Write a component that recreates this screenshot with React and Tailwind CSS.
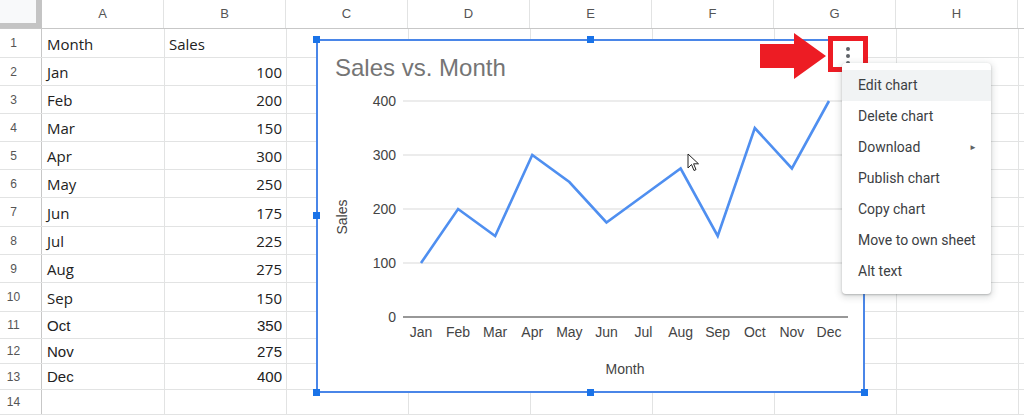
import React from "react";

const columns = ["A", "B", "C", "D", "E", "F", "G", "H"];

const rows = [
  ["Month", "Sales"],
  ["Jan", 100],
  ["Feb", 200],
  ["Mar", 150],
  ["Apr", 300],
  ["May", 250],
  ["Jun", 175],
  ["Jul", 225],
  ["Aug", 275],
  ["Sep", 150],
  ["Oct", 350],
  ["Nov", 275],
  ["Dec", 400],
  ["", ""],
];

const rowHeights = ["h-[29px]", "h-[28px]", "h-[28px]", "h-[28px]", "h-[28px]", "h-[28px]", "h-[29px]", "h-[28px]", "h-[28px]", "h-[29px]", "h-[27px]", "h-[25px]", "h-[26px]", "h-[25px]"];

const menuItems = ["Edit chart", "Delete chart", "Download", "Publish chart", "Copy chart", "Move to own sheet", "Alt text"];

const data = rows.slice(1, 13);
const px = (i) => 421 + i * 37.09;
const py = (v) => 317 - v * 0.54;

function Chart() {
  const points = data.map((d, i) => `${px(i)},${py(d[1])}`).join(" ");
  return (
    <div className="absolute left-[316px] top-[39px] w-[549px] h-[354px] bg-white">
      <svg className="absolute inset-0" width="549" height="354" viewBox="316 39 549 354">
        <text x="335" y="76" fontSize="24" fill="#757575" fontFamily="Liberation Sans, Arial, sans-serif">
          Sales vs. Month
        </text>
        {[400, 300, 200, 100].map((v) => (
          <g key={v}>
            <line x1="403" x2="848" y1={py(v)} y2={py(v)} stroke="#d9d9d9" strokeWidth="1.2" />
            <text x="396" y={py(v) + 5} fontSize="14" fill="#444" textAnchor="end" fontFamily="Liberation Sans, Arial, sans-serif">
              {v}
            </text>
          </g>
        ))}
        <line x1="403" x2="848" y1="317" y2="317" stroke="#333" strokeWidth="1.2" />
        <text x="396" y="322" fontSize="14" fill="#444" textAnchor="end" fontFamily="Liberation Sans, Arial, sans-serif">
          0
        </text>
        {data.map((d, i) => (
          <text key={d[0]} x={px(i)} y="337" fontSize="14" fill="#444" textAnchor="middle" fontFamily="Liberation Sans, Arial, sans-serif">
            {d[0]}
          </text>
        ))}
        <text x="625" y="374" fontSize="14" fill="#444" textAnchor="middle" fontFamily="Liberation Sans, Arial, sans-serif">
          Month
        </text>
        <text x="347" y="217" fontSize="14" fill="#444" textAnchor="middle" transform="rotate(-90 347 217)" fontFamily="Liberation Sans, Arial, sans-serif">
          Sales
        </text>
        <polyline points={points} fill="none" stroke="#4f8ff0" strokeWidth="2.6" strokeLinejoin="miter" />
      </svg>
      <div className="absolute inset-0 border-2 border-[#4a86e8]" />
    </div>
  );
}

function Handle({ className }) {
  return <div className={`absolute w-[7px] h-[7px] bg-[#1a73e8] ${className}`} />;
}

export default function App() {
  return (
    <div className="relative w-[1024px] h-[417px] overflow-hidden bg-white font-['Open_Sans',sans-serif] text-[#222]">
      {/* column headers */}
      <div className="flex h-[29px] border-b border-[#c7c7c7]">
        <div className="w-[42px] shrink-0 bg-[#f8f9fa] border-r-[6px] border-b-[5px] border-[#c4c4c4]" />
        {columns.map((c) => (
          <div key={c} className="w-[122px] shrink-0 border-r border-[#e2e3e3] text-center text-[13px] leading-[28px] text-[#555] font-['Liberation_Sans',sans-serif]">
            {c}
          </div>
        ))}
        <div className="flex-1" />
      </div>

      {rows.map((r, i) => (
        <div key={i} className={`flex ${rowHeights[i]} border-b border-[#e2e3e3]`}>
          <div className="w-[42px] shrink-0 border-r border-[#c7c7c7] flex items-center">
            <span className="w-[27px] text-center text-[12px] text-[#555] font-['Liberation_Sans',sans-serif]">{i + 1}</span>
          </div>
          <div className={`w-[123px] shrink-0 border-r border-[#e2e3e3] flex items-center pl-[5px] pt-[2px] text-[15px] ${i >= 10 ? "font-['Liberation_Sans',sans-serif]" : ""}`}>
            {r[0]}
          </div>
          <div className={`w-[122px] shrink-0 border-r border-[#e2e3e3] flex items-center pr-[4px] pt-[2px] text-[15px] ${i === 0 ? "justify-start pl-[4px]" : "justify-end"} ${i >= 10 ? "font-['Liberation_Sans',sans-serif]" : ""}`}>
            {r[1]}
          </div>
          {[0, 1, 2, 3, 4, 5].map((k) => (
            <div key={k} className="w-[122px] shrink-0 border-r border-[#e2e3e3]" />
          ))}
          <div className="flex-1" />
        </div>
      ))}

      <Chart />

      {/* selection handles */}
      <Handle className="left-[313px] top-[36px]" />
      <Handle className="left-[587px] top-[36px]" />
      <Handle className="left-[861px] top-[36px]" />
      <Handle className="left-[313px] top-[212px]" />
      <Handle className="left-[861px] top-[212px]" />
      <Handle className="left-[313px] top-[389px]" />
      <Handle className="left-[587px] top-[389px]" />
      <Handle className="left-[861px] top-[389px]" />

      {/* red arrow */}
      <svg className="absolute left-[758px] top-[31px]" width="70" height="50" viewBox="758 31 70 50">
        <polygon points="760,44 794,44 794,33 826,56 794,79 794,68 760,68" fill="#ed1c24" />
      </svg>

      {/* red box with kebab */}
      <div className="absolute left-[828px] top-[36px] w-[40px] h-[36px] border-[5px] border-[#ed1c24] bg-white flex flex-col items-center pt-[6px] gap-[3px]">
        <span className="w-[4px] h-[4px] rounded-full bg-[#5f6368]" />
        <span className="w-[4px] h-[4px] rounded-full bg-[#5f6368]" />
        <span className="w-[4px] h-[4px] rounded-full bg-[#5f6368]" />
      </div>

      {/* context menu */}
      <div className="absolute left-[842px] top-[63px] w-[149px] py-[7px] bg-white rounded-[4px] shadow-[0_2px_6px_2px_rgba(60,64,67,0.15),0_1px_2px_rgba(60,64,67,0.3)] font-['Roboto',sans-serif] text-[14px] text-[#3c4043]">
        {menuItems.map((m, i) => (
          <div key={m} className={`h-[31px] flex items-center pl-[16px] pr-[14px] ${i === 0 ? "bg-[#f1f3f4]" : ""}`}>
            <span className="flex-1">{m}</span>
            {m === "Download" && <span className="text-[8px] text-[#5f6368]">►</span>}
          </div>
        ))}
      </div>

      {/* mouse cursor */}
      <svg className="absolute left-[687px] top-[153px]" width="14" height="20" viewBox="0 0 14 20">
        <path d="M1 1 L1 15 L4.5 11.5 L7 17.5 L9 16.6 L6.6 10.8 L11.5 10.8 Z" fill="#fff" stroke="#222" strokeWidth="1" strokeLinejoin="round" />
      </svg>
    </div>
  );
}
